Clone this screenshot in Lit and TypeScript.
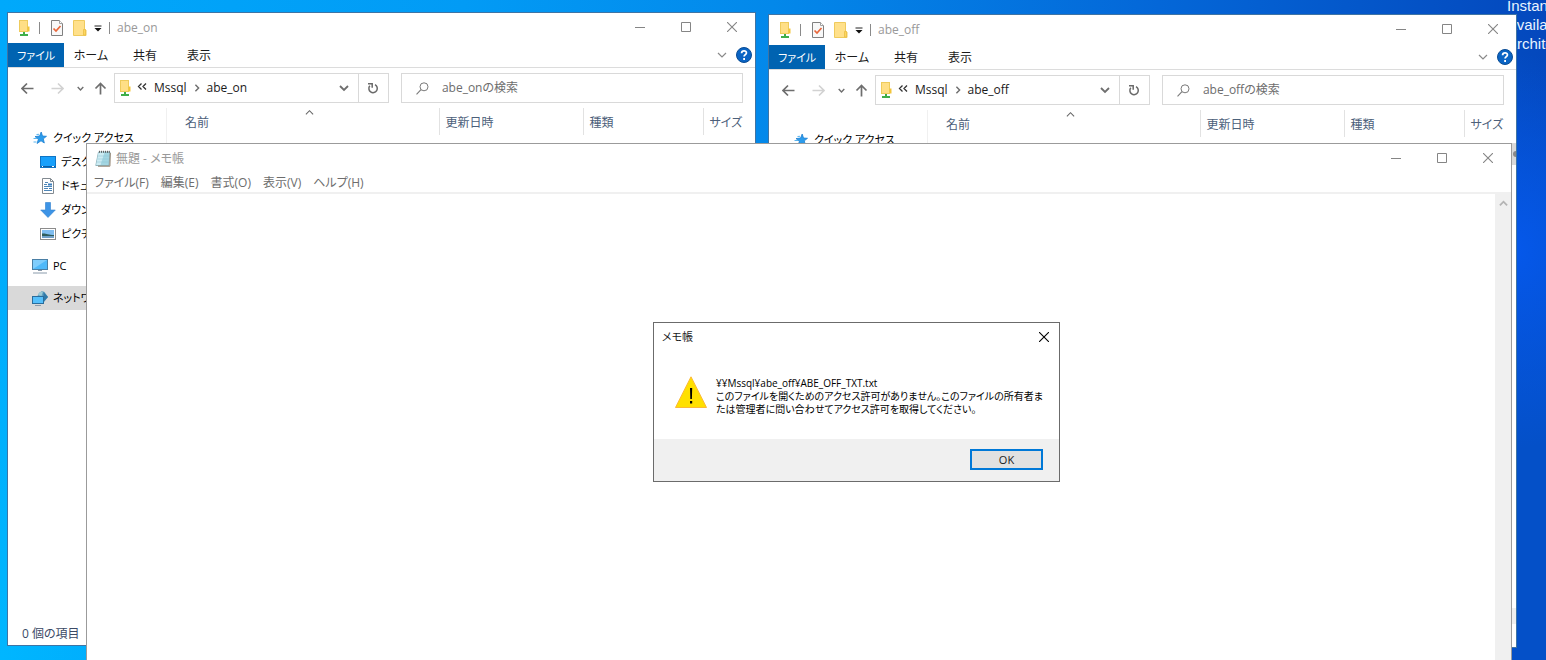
import { LitElement, html, svg, css, nothing } from "lit";
import { customElement, property } from "lit/decorators.js";

/* ---------- icons ---------- */

const netFolder = html`<svg width="12" height="18" viewBox="0 0 12 18" aria-hidden="true">
  <rect x="1.5" y="1.5" width="8" height="11" fill="#ffdf86" stroke="#eecb5c" />
  <path d="M9.5 7.5h2v5h-2z" fill="#f2c53a" />
  <path d="M5 13h2v2h3v2H2v-2h3z" fill="#3fae49" />
</svg>`;

const checkDoc = html`<svg width="12" height="16" viewBox="0 0 12 16" aria-hidden="true">
  <path d="M.5.5h8l3 3v12H.5z" fill="#f8f8f8" stroke="#808080" />
  <path d="M8.500.5v3h3" fill="#fff" stroke="#a0a0a0" />
  <path d="M2.500 8.500l2.500 2.500 4.500-5" fill="none" stroke="#e8663a" stroke-width="1.700" />
</svg>`;

const folder = html`<svg width="14" height="16" viewBox="0 0 14 16" aria-hidden="true">
  <path d="M.5.5h11v9.500h1.500v5.500H.5z" fill="#ffe08a" stroke="#efca5c" />
  <path d="M10.500 9.500h2v5.500h-2z" fill="#ffd65f" stroke="#eabf45" stroke-width=".8" />
</svg>`;

const customize = html`<svg width="8" height="7" viewBox="0 0 8 7" aria-hidden="true">
  <path d="M.5 1h7" stroke="#222" />
  <path d="M.5 3h7L4 6.500z" fill="#111" />
</svg>`;

const minimize = html`<svg width="10" height="10" viewBox="0 0 10 10" aria-hidden="true">
  <path d="M0 5.500h10" stroke="currentColor" />
</svg>`;

const maximize = html`<svg width="10" height="10" viewBox="0 0 10 10" aria-hidden="true">
  <path d="M.5.5h9v9h-9z" fill="none" stroke="currentColor" />
</svg>`;

const cross = html`<svg width="10" height="10" viewBox="0 0 10 10" aria-hidden="true">
  <path d="M0 0l10 10M10 0L0 10" fill="none" stroke="currentColor" stroke-width="1.100" />
</svg>`;

const chevron = (d: string, size: number, weight: number) => html`<svg
  width=${size} height=${size} viewBox="0 0 10 10" aria-hidden="true">
  ${svg`<path d=${d} fill="none" stroke="currentColor" stroke-width=${weight} />`}
</svg>`;
const DOWN = "M1 3l4 4 4-4";
const UP = "M1 7l4-4 4 4";
const RIGHT = "M3 1l4 4-4 4";
const DOUBLE_LEFT = "M4.500 1.500L1.500 4.500l3 3M9 1.500L6 4.500l3 3";

const help = html`<svg width="16" height="16" viewBox="0 0 16 16" aria-hidden="true">
  <circle cx="8" cy="8" r="7.500" fill="#0a64c4" stroke="#0a4c94" />
  <path d="M5.600 6.200c.1-3.200 5-3 4.800-.2-.1 1.600-2.300 1.700-2.300 3.500M8.100 11v1.900" fill="none" stroke="#fff" stroke-width="1.800" />
</svg>`;

const arrow = (d: string) => html`<svg width="13" height="13" viewBox="0 0 13 13" aria-hidden="true">
  ${svg`<path d=${d} fill="none" stroke="currentColor" stroke-width="1.700" />`}
</svg>`;
const LEFT_ARROW = "M12.500 6.500H1.500M6 1.500l-5 5 5 5";
const RIGHT_ARROW = "M.5 6.500h11M7 1.500l5 5-5 5";
const UP_ARROW = "M6.500 12.500v-11M1.500 6.500l5-5 5 5";

const refresh = html`<svg width="12" height="12" viewBox="0 0 12 12" aria-hidden="true">
  <path d="M8 2.700A4.200 4.200 0 1 1 2.800 3.800" fill="none" stroke="#6a6a6a" stroke-width="1.500" />
  <path d="M1 1.700h4.200v4" fill="none" stroke="#6a6a6a" stroke-width="1.500" />
</svg>`;

const search = html`<svg width="13" height="13" viewBox="0 0 13 13" aria-hidden="true">
  <circle cx="8" cy="4.800" r="4" fill="none" stroke="#7a7a7a" />
  <path d="M5 7.700L.5 12.300" stroke="#7a7a7a" stroke-width="1.100" />
</svg>`;

const star = html`<svg width="16" height="16" viewBox="0 0 16 16" aria-hidden="true">
  <path d="M9.200 2l1.300 4 4 .3-3.200 2.500 1 4.200L9 10.800l-3.900 2.700 1.300-4.400L3 6.600 7.600 6z" fill="#2b9cec" stroke="#1d7fd0" stroke-width=".8" />
  <path d="M4.500 4.500l2.500-.2M1.500 8.500h3.500M1.500 12h3" stroke="#58b4ef" />
</svg>`;

const desktopIcon = html`<svg width="16" height="16" viewBox="0 0 16 16" aria-hidden="true">
  <rect x=".5" y="2.500" width="15" height="11" fill="#18a0fb" stroke="#0f74c4" />
  <path d="M1 12.500h14" stroke="#0b5da5" />
  <path d="M2 12.500h1M12 12.500h2" stroke="#fff" />
</svg>`;

const documentIcon = html`<svg width="16" height="16" viewBox="0 0 16 16" aria-hidden="true">
  <path d="M2.500.5h8l3 3v12h-11z" fill="#fff" stroke="#828a91" />
  <path d="M10.500.5v3h3" fill="none" stroke="#828a91" />
  <path d="M4 6.500h3M5 4.500h3M4 8.500h8M4 10.500h4M4 12.500h8" stroke="#4d86b8" />
  <path d="M8 5.500h4v2H8zM9 10h3v1H9z" fill="#3d7fbd" />
</svg>`;

const downloadIcon = html`<svg width="16" height="16" viewBox="0 0 16 16" aria-hidden="true">
  <path d="M5.500.5h5V8h4.800L8 15.500.700 8h4.800z" fill="#3d94e6" stroke="#2f7fce" stroke-width=".6" />
</svg>`;

const pictureIcon = html`<svg width="16" height="16" viewBox="0 0 16 16" aria-hidden="true">
  <rect x=".5" y="2.500" width="15" height="11" fill="#fff" stroke="#8c8c8c" />
  <rect x="2" y="4" width="12" height="8" fill="#7fbdf0" />
  <path d="M2 7.500c4-.5 6 1.500 12 1.500v1H2z" fill="#2f5d5c" />
  <path d="M2 10h12v2H2z" fill="#6f9fc8" />
</svg>`;

const pcIcon = html`<svg width="16" height="16" viewBox="0 0 16 16" aria-hidden="true">
  <rect x=".5" y="1.500" width="15" height="10" fill="#4fb9fa" stroke="#4a7fa5" />
  <path d="M1 11V2h14z" fill="#7fcdfc" />
  <path d="M6 12.500h4M1 15h14" stroke="#8a9bab" />
</svg>`;

const networkIcon = html`<svg width="16" height="16" viewBox="0 0 16 16" aria-hidden="true">
  <path d="M5.500 6l1.500-3 3-2 2.500 1 3.500 5-4 5H5z" fill="#5f9fc0" />
  <path d="M6 5c1-3 3-3.500 5-3.500L9.500 6z" fill="#9ccbd6" />
  <path d="M11.500 2l4.500 5-4.500 5z" fill="#2f79a8" />
  <rect x=".5" y="6.500" width="11" height="7" fill="#56c0fb" stroke="#2a6d9c" />
  <path d="M3 15.500h6" stroke="#8a9bab" />
</svg>`;

const notepadIcon = html`<svg width="16" height="17" viewBox="0 0 16 17" aria-hidden="true">
  <path d="M3.500 2h11.500L14 15.500H.8z" fill="#a3d6e2" stroke="#7fa6b0" stroke-width=".8" />
  <path d="M3.500 2.500h6l-4 12.500H1.200z" fill="#cdecf3" />
  <path d="M15.300 3l-.4 13.200H3" fill="none" stroke="#8f7f6c" />
  <path d="M3 6h11M2.500 9h11.300M2 12h11.500" stroke="#8cc3d2" stroke-width=".5" />
  <path d="M4.500.8v2M6.500.8v2M8.500.8v2M10.500.8v2M12.500.8v2M14.300.8v2" stroke="#555" stroke-width=".9" />
</svg>`;

const warningIcon = html`<svg width="32" height="32" viewBox="0 0 32 32" role="img" aria-label="警告">
  <path d="M16 .8L31.500 31.500H.5z" fill="#ffe000" stroke="#fbb936" />
  <path d="M15 12h2.200l-.3 11h-1.600zM15 25h2.200v2.500H15z" fill="#000" />
</svg>`;

/* ---------- shared styles ---------- */

const base = css`
  * {
    box-sizing: border-box;
  }
  :host {
    font: 12px/16px "Open Sans", "Noto Sans CJK JP", sans-serif;
    font-feature-settings: "palt";
    color: #1a1a1a;
  }
  button {
    display: flex;
    align-items: center;
    justify-content: center;
    margin: 0;
    padding: 0;
    border: 0;
    background: none;
    color: inherit;
    font: inherit;
    font-feature-settings: inherit;
    white-space: nowrap;
  }
  svg {
    display: block;
    flex: none;
  }
`;

/* ---------- caption buttons ---------- */

@customElement("window-controls")
export class WindowControls extends LitElement {
  static styles = [
    base,
    css`
      :host {
        display: flex;
        color: #858585;
      }
      .control {
        width: 46px;
        height: 28px;
      }
    `,
  ];

  render() {
    return html`
      <button class="control" aria-label="最小化">${minimize}</button>
      <button class="control" aria-label="最大化">${maximize}</button>
      <button class="control" aria-label="閉じる">${cross}</button>
    `;
  }
}

/* ---------- explorer window ---------- */

const places = [
  { label: "クイック アクセス", icon: star, cls: "root" },
  { label: "デスクトップ", icon: desktopIcon, cls: "" },
  { label: "ドキュメント", icon: documentIcon, cls: "" },
  { label: "ダウンロード", icon: downloadIcon, cls: "" },
  { label: "ピクチャ", icon: pictureIcon, cls: "" },
  { label: "PC", icon: pcIcon, cls: "group" },
  { label: "ネットワーク", icon: networkIcon, cls: "group selected" },
];

@customElement("explorer-window")
export class ExplorerWindow extends LitElement {
  @property() folder = "";
  @property({ type: Boolean }) pane = false;

  static styles = [
    base,
    css`
      :host {
        display: flex;
        flex-direction: column;
        box-sizing: border-box;
        background: #fff;
        border: 1px solid #3f74a4;
        overflow: hidden;
      }
      .titlebar {
        display: flex;
        align-items: center;
        height: 30px;
        padding-left: 10px;
        color: #999;
      }
      .titlebar .controls {
        align-self: flex-start;
        margin-left: auto;
      }
      .divider {
        width: 1px;
        height: 12px;
        margin: 0 11px 0 9px;
        background: #8a8a8a;
      }
      .divider.late {
        margin: 0 7px;
      }
      .quick {
        margin-right: 10px;
      }
      .quick.tight {
        margin-right: 7px;
      }
      .quick.last {
        margin-right: 0;
      }
      .ribbon {
        display: flex;
        align-items: center;
        height: 25px;
        padding-right: 3px;
        border-bottom: 1px solid #dcdcdc;
      }
      .tab {
        width: 54px;
        height: 24px;
        padding-top: 1px;
      }
      .tab.file {
        width: 56px;
        background: #0063b1;
        color: #fff;
        font-size: 11px;
      }
      .expand {
        margin: 0 9px 0 auto;
        color: #8a8a8a;
      }
      .nav {
        display: flex;
        align-items: center;
        height: 40px;
        padding: 0 12px;
        color: #6e6e6e;
      }
      .arrows {
        display: flex;
        align-items: center;
        width: 94px;
        padding-left: 1px;
      }
      .back {
        margin-right: 17px;
      }
      .forward {
        margin-right: 13px;
        color: #d2d2d2;
      }
      .recent {
        margin-right: 10px;
      }
      .fields {
        display: grid;
        flex: 1;
        grid-template-columns: 45fr 56fr;
        gap: 12px;
      }
      .box {
        display: flex;
        align-items: center;
        height: 30px;
        min-width: 0;
        border: 1px solid #d9d9d9;
      }
      .address {
        padding-left: 4px;
      }
      .earlier {
        margin: 0 7px 3px 6px;
        color: #333;
      }
      .crumb {
        color: #1a1a1a;
      }
      .next {
        margin: 0 6px;
      }
      .history {
        margin-left: auto;
        margin-right: 9px;
      }
      .refresh {
        width: 30px;
        height: 28px;
        border-left: 1px solid #d9d9d9;
      }
      .search {
        padding-left: 14px;
        gap: 13px;
      }
      .query {
        flex: 1;
        min-width: 0;
        padding: 0;
        border: 0;
        outline: 0;
        background: none;
        font: inherit;
        font-feature-settings: inherit;
      }
      .query::placeholder {
        color: #6d6d6d;
        opacity: 1;
      }
      .main {
        display: flex;
        flex: 1;
        min-height: 0;
      }
      .places {
        width: 159px;
        padding-top: 18px;
        border-right: 1px solid #f0f0f0;
        font-size: 11px;
      }
      .place {
        display: flex;
        align-items: center;
        gap: 5px;
        height: 24px;
        padding-left: 32px;
        color: #000;
        text-decoration: none;
        white-space: nowrap;
      }
      .place.root,
      .place.group {
        padding-left: 24px;
      }
      .place.group {
        margin-top: 8px;
      }
      .place.selected {
        background: #d9d9d9;
      }
      .content {
        position: relative;
        display: flex;
        flex-direction: column;
        flex: 1;
        min-width: 0;
      }
      .files {
        width: 100%;
        table-layout: fixed;
        border-collapse: collapse;
        color: #4c607a;
      }
      .lead {
        width: 12px;
      }
      .date {
        width: 144px;
      }
      .kind {
        width: 120px;
      }
      .size {
        width: 52px;
      }
      .head {
        height: 27px;
        padding: 2px 0 0 6px;
        border-right: 1px solid #e2e2e2;
        text-align: left;
        font-weight: 400;
        white-space: nowrap;
      }
      .head.edge {
        border-right: 0;
      }
      .sort {
        position: absolute;
        top: 0;
        left: 138px;
        color: #666;
      }
      .band {
        display: flex;
        align-items: center;
        justify-content: flex-end;
        height: 22px;
        margin-top: 6px;
        background: #d9d9d9;
      }
      .dot {
        width: 3px;
        height: 6px;
        border-radius: 3px 0 0 3px;
        background: #8a8a8a;
      }
      .track {
        height: 16px;
        margin-top: auto;
        background: #efefef;
      }
      .status {
        height: 23px;
        padding: 4px 14px;
        color: #3b4a66;
      }
    `,
  ];

  render() {
    return html`
      <header class="titlebar">
        <span class="quick last">${netFolder}</span>
        <span class="divider"></span>
        <button class="quick" aria-label="プロパティ">${checkDoc}</button>
        <button class="quick tight" aria-label="新しいフォルダー">${folder}</button>
        <button class="quick last" aria-label="クイック アクセス ツール バーのカスタマイズ">${customize}</button>
        <span class="divider late"></span>
        <span>${this.folder}</span>
        <window-controls class="controls"></window-controls>
      </header>
      <div class="ribbon">
        <button class="tab file">ファイル</button>
        <button class="tab">ホーム</button>
        <button class="tab">共有</button>
        <button class="tab">表示</button>
        <button class="expand" aria-label="リボンの展開">${chevron(DOWN, 10, 1.2)}</button>
        <button aria-label="ヘルプ">${help}</button>
      </div>
      <div class="nav">
        <div class="arrows">
          <button class="back" aria-label="戻る">${arrow(LEFT_ARROW)}</button>
          <button class="forward" aria-label="進む">${arrow(RIGHT_ARROW)}</button>
          <button class="recent" aria-label="最近表示した場所">${chevron(DOWN, 7, 2)}</button>
          <button aria-label="上へ">${arrow(UP_ARROW)}</button>
        </div>
        <div class="fields">
          <div class="box address">
            ${netFolder}
            <span class="earlier">${chevron(DOUBLE_LEFT, 10, 1.3)}</span>
            <button class="crumb">Mssql</button>
            <span class="next">${chevron(RIGHT, 8, 1.8)}</span>
            <button class="crumb">${this.folder}</button>
            <button class="history" aria-label="以前の場所">${chevron(DOWN, 10, 1.8)}</button>
            <button class="refresh" aria-label="最新の情報に更新">${refresh}</button>
          </div>
          <label class="box search">
            ${search}
            <input class="query" type="search" aria-label="検索" placeholder=${`${this.folder}の検索`} />
          </label>
        </div>
      </div>
      <div class="main">
        <nav class="places">
          ${places.map(
            (p) => html`<a class="place ${p.cls}" href="#">${p.icon}<span>${p.label}</span></a>`,
          )}
        </nav>
        <div class="content">
          <table class="files">
            <colgroup>
              <col class="lead" />
              <col />
              <col class="date" />
              <col class="kind" />
              <col class="size" />
            </colgroup>
            <thead>
              <tr>
                <td class="head edge"></td>
                <th class="head">名前</th>
                <th class="head">更新日時</th>
                <th class="head">種類</th>
                <th class="head edge">サイズ</th>
              </tr>
            </thead>
          </table>
          <span class="sort">${chevron(UP, 9, 1.2)}</span>
          ${this.pane
            ? html`<div class="band"><span class="dot"></span></div>
                <div class="track"></div>`
            : nothing}
        </div>
      </div>
      <footer class="status">${this.pane ? nothing : "0 個の項目"}</footer>
    `;
  }
}

/* ---------- notepad window ---------- */

@customElement("notepad-window")
export class NotepadWindow extends LitElement {
  static styles = [
    base,
    css`
      :host {
        display: flex;
        flex-direction: column;
        box-sizing: border-box;
        background: #fff;
        border: 1px solid #9b9b9b;
        border-bottom: 0;
      }
      .titlebar {
        display: flex;
        align-items: center;
        gap: 5px;
        height: 28px;
        padding-left: 8px;
        color: #999;
      }
      .title {
        padding-top: 2px;
      }
      .controls {
        margin-left: auto;
      }
      .menu {
        display: flex;
        gap: 12px;
        height: 22px;
        padding: 2px 7px 0;
        border-bottom: 2px solid #f0f0f0;
        color: #6d6d6d;
      }
      .editor {
        display: flex;
        flex: 1;
        min-height: 0;
      }
      .text {
        flex: 1;
        min-width: 0;
        border: 0;
        outline: 0;
        resize: none;
        overflow: hidden;
        font: inherit;
      }
      .bar {
        display: flex;
        justify-content: center;
        width: 16px;
        padding-top: 5px;
        background: #f0f0f0;
        color: #b4b4b4;
      }
    `,
  ];

  render() {
    return html`
      <header class="titlebar">
        ${notepadIcon}
        <span class="title">無題 - メモ帳</span>
        <window-controls class="controls"></window-controls>
      </header>
      <nav class="menu">
        ${["ファイル(F)", "編集(E)", "書式(O)", "表示(V)", "ヘルプ(H)"].map(
          (m) => html`<button>${m}</button>`,
        )}
      </nav>
      <div class="editor">
        <textarea class="text" aria-label="テキスト エディター"></textarea>
        <div class="bar">${chevron(UP, 9, 2)}</div>
      </div>
    `;
  }
}

/* ---------- message box ---------- */

@customElement("message-box")
export class MessageBox extends LitElement {
  static styles = [
    base,
    css`
      :host {
        display: flex;
        flex-direction: column;
        box-sizing: border-box;
        background: #fff;
        border: 1px solid #6b6b6b;
      }
      .titlebar {
        display: flex;
        align-items: center;
        justify-content: space-between;
        height: 28px;
        padding-left: 8px;
        font-size: 11px;
      }
      .close {
        width: 30px;
        height: 28px;
        color: #000;
      }
      .body {
        display: flex;
        gap: 9px;
        padding: 25px 21px 23px;
      }
      .message {
        margin: 0;
        padding-top: 1px;
        color: #000;
        font-size: 10px;
        line-height: 13px;
        white-space: nowrap;
      }
      .path {
        display: block;
      }
      .actions {
        display: flex;
        justify-content: flex-end;
        padding: 10px 16px 11px;
        background: #f0f0f0;
      }
      .ok {
        width: 73px;
        height: 21px;
        border: 2px solid #0078d7;
        background: #e1e1e1;
        font-size: 11px;
      }
    `,
  ];

  render() {
    return html`
      <header class="titlebar">
        <span>メモ帳</span>
        <button class="close" aria-label="閉じる">${cross}</button>
      </header>
      <div class="body">
        ${warningIcon}
        <p class="message">
          <span class="path">¥¥Mssql¥abe_off¥ABE_OFF_TXT.txt</span>
          このファイルを開くためのアクセス許可がありません。このファイルの所有者ま<br />たは管理者に問い合わせてアクセス許可を取得してください。
        </p>
      </div>
      <footer class="actions"><button class="ok">OK</button></footer>
    `;
  }
}

/* ---------- desktop ---------- */

@customElement("app-root")
export class AppRoot extends LitElement {
  static styles = css`
    :host {
      display: block;
      position: relative;
      height: 100vh;
      overflow: hidden;
      background:
        radial-gradient(ellipse 10% 30% at 98% 38%, #0558ea, transparent),
        radial-gradient(ellipse 12% 80% at 0 100%, #00b6ff, transparent),
        linear-gradient(180deg, transparent 10%, #0450c8 60%) 100% 0 / 5% 100% no-repeat,
        linear-gradient(90deg, #00a9fb 0%, #029bf5 30%, #0388ea 50%, #0467d8 75%, #0448bd 100%);
    }
    .info {
      position: absolute;
      top: -4px;
      left: 1507px;
      color: #e8f4ff;
      font: 15px/19px "Liberation Sans", Arial, sans-serif;
      white-space: nowrap;
    }
    .window {
      position: absolute;
    }
    .on {
      top: 12px;
      left: 7px;
      width: 749px;
      height: 634px;
    }
    .off {
      top: 14px;
      left: 768px;
      width: 749px;
      height: 634px;
    }
    .notepad {
      top: 143px;
      right: 34px;
      bottom: 0;
      left: 86px;
    }
    .alert {
      top: 322px;
      left: 653px;
      width: 407px;
    }
  `;

  render() {
    return html`
      <div class="info">Instance<br />Availability Zone<br />Architecture</div>
      <explorer-window class="window on" folder="abe_on"></explorer-window>
      <explorer-window class="window off" folder="abe_off" pane></explorer-window>
      <notepad-window class="window notepad"></notepad-window>
      <message-box class="window alert" role="alertdialog" aria-label="メモ帳"></message-box>
    `;
  }
}
